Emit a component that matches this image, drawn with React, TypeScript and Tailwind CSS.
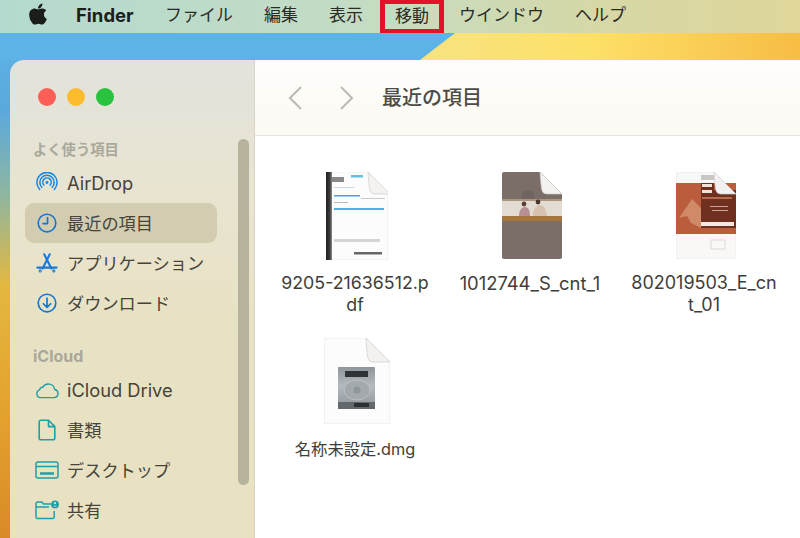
import React from "react";
import { FaApple } from "react-icons/fa";

const jp = "font-['Inter','Noto_Sans_CJK_JP',sans-serif]";

const menus = [
  { label: "ファイル", w: "w-[99px]" },
  { label: "編集", w: "w-[65px]" },
  { label: "表示", w: "w-[51px]" },
];

function MenuBar() {
  return (
    <div className="relative flex h-[33px] shrink-0 items-start bg-[linear-gradient(90deg,#b4dacf_0%,#c4dcc4_45%,#d6d8a6_75%,#dfd69a_100%)] text-[17px] leading-[31px] text-[#2a2c28]">
      <FaApple className="ml-[26px] mt-[2px] h-[24px] w-[24px] text-[#1b1d1a]" />
      <span className="ml-[26px] w-[89px] text-[18.5px] font-bold text-[#1c1e1b]">Finder</span>
      {menus.map((m) => (
        <span key={m.label} className={m.w}>
          {m.label}
        </span>
      ))}
      <span className="flex h-[33px] w-[64px] items-center justify-center border-x-[5px] border-y-[4px] border-[#e3122a]">移動</span>
      <span className="ml-[15px] w-[116px]">ウインドウ</span>
      <span>ヘルプ</span>
    </div>
  );
}

function AirDropIcon() {
  return (
    <svg viewBox="0 0 24 24" className="h-[22px] w-[22px]" fill="none" stroke="#1e87dc" strokeWidth="1.7" strokeLinecap="round">
      <circle cx="12" cy="11.5" r="1.6" fill="#1e87dc" stroke="none" />
      <path d="M8.6 14.2a4.6 4.6 0 1 1 6.8 0" />
      <path d="M6.3 16.6a7.8 7.8 0 1 1 11.4 0" />
      <path d="M4 19a11 11 0 1 1 16 0" />
    </svg>
  );
}

function ClockIcon() {
  return (
    <svg viewBox="0 0 24 24" className="h-[22px] w-[22px]" fill="none" stroke="#1277d2" strokeWidth="1.8" strokeLinecap="round" strokeLinejoin="round">
      <circle cx="12" cy="12" r="9.6" />
      <path d="M12.6 6v6.6H7.6" />
    </svg>
  );
}

function AppsIcon() {
  return (
    <svg viewBox="0 0 24 24" className="h-[22px] w-[22px]" fill="none" stroke="#1a7ad6" strokeWidth="2.3" strokeLinecap="round" strokeLinejoin="round">
      <path d="M9 2.5 16.8 18" />
      <path d="M15 2.5 7.2 18" />
      <path d="M1.5 17h21" />
      <circle cx="4.6" cy="20.6" r="0.6" />
      <circle cx="19.4" cy="20.6" r="0.6" />
    </svg>
  );
}

function DownloadIcon() {
  return (
    <svg viewBox="0 0 24 24" className="h-[22px] w-[22px]" fill="none" stroke="#1277d2" strokeWidth="1.8" strokeLinecap="round" strokeLinejoin="round">
      <circle cx="12" cy="12" r="9.6" />
      <path d="M12 6.5v10M8 12.8l4 3.9 4-3.9" />
    </svg>
  );
}

function CloudIcon() {
  return (
    <svg viewBox="0 0 26 20" className="h-[20px] w-[26px]" fill="none" stroke="#1f9fa8" strokeWidth="1.5" strokeLinejoin="round">
      <path d="M6 18.2h14.6a4.4 4.4 0 0 0 .8-8.7A7 7 0 0 0 8.4 7.1a3 3 0 0 0-3.4 2.7A4.3 4.3 0 0 0 6 18.2Z" />
    </svg>
  );
}

function DocIcon() {
  return (
    <svg viewBox="0 0 18 22" className="h-[22px] w-[18px]" fill="none" stroke="#1f9fa8" strokeWidth="1.6" strokeLinejoin="round">
      <path d="M3 1.2h7.5L16.8 7.6V19a1.8 1.8 0 0 1-1.8 1.8H3A1.8 1.8 0 0 1 1.2 19V3A1.8 1.8 0 0 1 3 1.2Z" />
      <path d="M10.5 1.2V7.6h6.3" />
    </svg>
  );
}

function DesktopIcon() {
  return (
    <svg viewBox="0 0 24 18" className="h-[18px] w-[24px]" fill="none" stroke="#1f9fa8" strokeWidth="1.5">
      <rect x="1" y="1" width="22" height="16" rx="2" />
      <path d="M1 5.5h22" />
      <path d="M5 12.5h14" strokeWidth="2.5" />
    </svg>
  );
}

function SharedIcon() {
  return (
    <svg viewBox="0 0 24 20" className="h-[20px] w-[24px]" fill="none" stroke="#1f9fa8" strokeWidth="1.5" strokeLinejoin="round">
      <path d="M16 4H8.6L7 2H2.6A1.6 1.6 0 0 0 1 3.6V17a1.6 1.6 0 0 0 1.6 1.6h15A1.6 1.6 0 0 0 19.2 17v-6" />
      <path d="M1 7h13" />
      <circle cx="20" cy="4.4" r="3.9" fill="#1f9fa8" stroke="none" />
      <circle cx="20" cy="3.2" r="1.1" fill="#e8e2c4" stroke="none" />
      <path d="M18 6.6c.5-1.2 3.5-1.2 4 0Z" fill="#e8e2c4" stroke="none" />
    </svg>
  );
}

function SidebarRow({ icon, label, latin, active }: { icon: React.ReactNode; label: string; latin?: boolean; active?: boolean }) {
  return (
    <div className={`flex h-[40px] shrink-0 items-center rounded-[9px] pl-[10px] text-[#45433a] ${latin ? "text-[18.3px]" : "text-[17.2px]"} ${active ? "bg-[#d2ccb0]" : ""}`}>
      <span className="flex w-[24px] items-center justify-center">{icon}</span>
      <span className="ml-[8px] translate-y-px">{label}</span>
    </div>
  );
}

function Sidebar() {
  return (
    <aside className="relative flex w-[245px] shrink-0 flex-col overflow-hidden border-r border-[#d9d5c2] bg-[linear-gradient(180deg,#e3e3dd_0%,#e8e4cf_30%,#e8e2c4_55%,#e8e2c3_100%)] pl-[15px] pr-[37px]">
      <div className="flex h-[74px] shrink-0 items-center gap-[11px] pl-[13px]">
        <span className="h-[18px] w-[18px] rounded-full bg-[#fd5f57]" />
        <span className="h-[18px] w-[18px] rounded-full bg-[#fdbc2e]" />
        <span className="h-[18px] w-[18px] rounded-full bg-[#29c33f]" />
      </div>
      <div className="h-[29px] shrink-0 pl-[8px] pt-[5px] text-[14.3px] font-bold leading-[22px] text-[#aaa89b]">よく使う項目</div>
      <SidebarRow icon={<AirDropIcon />} label="AirDrop" latin />
      <SidebarRow icon={<ClockIcon />} label="最近の項目" active />
      <SidebarRow icon={<AppsIcon />} label="アプリケーション" />
      <SidebarRow icon={<DownloadIcon />} label="ダウンロード" />
      <div className="h-[47px] shrink-0 pl-[8px] pt-[22px] text-[16px] font-bold leading-[22px] text-[#aaa89b]">iCloud</div>
      <SidebarRow icon={<CloudIcon />} label="iCloud Drive" latin />
      <SidebarRow icon={<DocIcon />} label="書類" />
      <SidebarRow icon={<DesktopIcon />} label="デスクトップ" />
      <SidebarRow icon={<SharedIcon />} label="共有" />
      <div className="absolute left-[228px] top-[79px] h-[346px] w-[11px] rounded-full bg-[#b6b29c]" />
    </aside>
  );
}

// page curl in the top right corner of a document icon
function Fold({ x, size }: { x: number; size: number }) {
  return (
    <path
      d={`M${x} 0Q${x + 1} ${size * 0.7} ${x + 2} ${size * 0.85}Q${x + 3} ${size} ${x + 7} ${size}H${x + size}Z`}
      fill="#f3f2f0"
      stroke="#cfcdca"
      strokeWidth="0.7"
    />
  );
}

function PdfThumb() {
  return (
    <svg viewBox="0 0 62 88" className="h-[88px] w-[62px] blur-[0.5px]">
      <defs>
        <linearGradient id="pdfSpine" x1="0" y1="0" x2="1" y2="0">
          <stop offset="0%" stopColor="#1f1f1f" />
          <stop offset="60%" stopColor="#3a3a3a" />
          <stop offset="100%" stopColor="#8a8a8a" />
        </linearGradient>
      </defs>
      <path d="M0 0H42L62 22V88H0Z" fill="#fcfcfc" stroke="#e4e3e1" strokeWidth="0.6" />
      <rect x="0" y="0" width="6" height="88" fill="url(#pdfSpine)" />
      <rect x="6" y="5" width="12" height="5" fill="#8a8a8a" />
      <rect x="25" y="3" width="12" height="2.5" fill="#62c0e3" />
      <rect x="8" y="23" width="26" height="1.5" fill="#36aedb" />
      <rect x="8" y="15" width="20" height="1" fill="#c7dbe4" />
      <rect x="8" y="30" width="14" height="1" fill="#bbb" />
      <rect x="35" y="26" width="24" height="1" fill="#ccc" />
      <rect x="8" y="36" width="50" height="2" fill="#49b5de" />
      <rect x="8" y="67" width="46" height="3" fill="#d5d5d5" />
      <rect x="28" y="80" width="28" height="2.5" fill="#666" />
      <Fold x={42} size={22} />
    </svg>
  );
}

function PhotoThumb() {
  return (
    <svg viewBox="0 0 60 87" className="h-[87px] w-[60px] blur-[0.5px]">
      <path d="M2 0H38L60 22V85Q60 87 58 87H2Q0 87 0 85V2Q0 0 2 0Z" fill="#7b6d67" />
      <rect x="0" y="28" width="60" height="16" fill="#e2dcd3" />
      <rect x="0" y="44" width="60" height="5" fill="#a5763e" />
      <path d="M0 27h60v2H0z" fill="#a8967f" />
      <path d="M17 44c0-6 3-9 6-9s5 3 5 9Z" fill="#b78f95" />
      <path d="M31 44c0-7 3-11 7-11s6 4 7 11Z" fill="#d7c2b0" />
      <circle cx="22" cy="32" r="2.4" fill="#5b4036" />
      <circle cx="36" cy="30" r="2.4" fill="#4a362d" />
      <path d="M20 20q6-3 12 0v7H20Z" fill="#6f6460" />
      <Fold x={38} size={22} />
    </svg>
  );
}

function BrochureThumb() {
  return (
    <svg viewBox="0 0 60 87" className="h-[87px] w-[60px] blur-[0.5px]">
      <path d="M0 0H38L60 22V87H0Z" fill="#f9f8f7" stroke="#e2e1df" strokeWidth="0.6" />
      <rect x="0" y="11" width="60" height="51" fill="#b95d3c" />
      <rect x="25" y="18" width="35" height="38" fill="#6f3020" />
      <rect x="25" y="11" width="13" height="11" fill="#6f3020" />
      <path d="M3 46 16 27l9 9v20l-10-5-4-7Z" fill="#d18a68" />
      <rect x="25" y="3" width="13" height="5" fill="#c9c7c4" />
      <rect x="26" y="12" width="10" height="3" fill="#f0e3dc" />
      <rect x="26" y="18" width="10" height="3" fill="#f0e3dc" />
      <rect x="26" y="25" width="30" height="2" fill="#b66c4d" />
      <rect x="34" y="34" width="18" height="1" fill="#c9a598" />
      <rect x="36" y="38" width="16" height="1" fill="#c9a598" />
      <rect x="25" y="50" width="33" height="4" fill="#f4e9e2" />
      <rect x="35" y="68" width="14" height="9" fill="none" stroke="#cfcfcf" strokeWidth="0.7" />
      <Fold x={38} size={22} />
    </svg>
  );
}

function DmgThumb() {
  return (
    <svg viewBox="0 0 66 86" className="h-[86px] w-[66px] blur-[0.5px]">
      <defs>
        <linearGradient id="dmgDisk" x1="0" y1="0" x2="0" y2="1">
          <stop offset="0%" stopColor="#8f969b" />
          <stop offset="45%" stopColor="#b4babe" />
          <stop offset="100%" stopColor="#8d9398" />
        </linearGradient>
      </defs>
      <path d="M2 0H42L66 24V84Q66 86 64 86H2Q0 86 0 84V2Q0 0 2 0Z" fill="#fcfcfc" stroke="#e3e2e0" strokeWidth="0.7" />
      <Fold x={42} size={24} />
      <rect x="14" y="29" width="37" height="42" rx="1" fill="url(#dmgDisk)" />
      <rect x="21" y="33" width="23" height="6" fill="#2f3336" />
      <ellipse cx="33" cy="52" rx="13" ry="10" fill="#a3a9ad" stroke="#c4c8cb" strokeWidth="0.7" />
      <circle cx="33" cy="52" r="3.5" fill="#8f969a" />
      <rect x="14" y="64" width="37" height="7" fill="#63686c" />
      <rect x="30" y="65" width="15" height="4" fill="#2d3033" />
    </svg>
  );
}

const files = [
  { thumb: <PdfThumb />, lines: ["9205-21636512.p", "df"], size: "text-[17.8px]" },
  { thumb: <PhotoThumb />, lines: ["1012744_S_cnt_1"], size: "text-[18.4px]" },
  { thumb: <BrochureThumb />, lines: ["802019503_E_cn", "t_01"], size: "text-[18px]" },
  { thumb: <DmgThumb />, lines: ["名称未設定.dmg"], size: "text-[16.3px]" },
];

function FileGrid() {
  return (
    <div className="grid flex-1 grid-cols-[176px_174px_174px] auto-rows-[166px] bg-white pl-[12px] pt-[36px] text-[#3f3e3b]">
      {files.map((f) => (
        <div key={f.lines[0]} className="flex flex-col items-center">
          <div className="flex h-[88px] items-start justify-center pl-[3px]">{f.thumb}</div>
          <div className={`mt-[12px] whitespace-nowrap text-center leading-[22px] ${f.size}`}>
            {f.lines.map((l) => (
              <div key={l}>{l}</div>
            ))}
          </div>
        </div>
      ))}
    </div>
  );
}

export default function App() {
  return (
    <div className={`flex h-[538px] w-[800px] flex-col overflow-hidden ${jp}`}>
      <MenuBar />
      <div className="relative flex min-h-0 flex-1 flex-col bg-[linear-gradient(180deg,#5eb3e6_0%,#5aa9dc_15%,#8fb6a0_32%,#e3b83f_50%,#e3a22e_75%,#d98a28_100%)] pl-[10px] pt-[27px]">
        <svg className="absolute left-0 top-0 h-[27px] w-[800px]" viewBox="0 0 800 27" preserveAspectRatio="none">
          <defs>
            <linearGradient id="wallSun" x1="0" y1="0" x2="1" y2="0">
              <stop offset="0%" stopColor="#f7e382" />
              <stop offset="45%" stopColor="#fde068" />
              <stop offset="100%" stopColor="#f7bd45" />
            </linearGradient>
          </defs>
          <rect width="800" height="27" fill="#5db3e6" />
          <path d="M455 0H800V27H420Z" fill="url(#wallSun)" />
        </svg>
        <div className="relative flex min-h-0 flex-1 overflow-hidden rounded-tl-[14px]">
          <Sidebar />
          <main className="flex min-w-0 flex-1 flex-col">
            <header className="flex h-[76px] shrink-0 items-center border-b border-[#e7e5df] bg-[linear-gradient(180deg,#fefdfb,#fcfaf3)] pl-[32px]">
              <svg viewBox="0 0 16 26" className="h-[26px] w-[16px]" fill="none" stroke="#bcbab4" strokeWidth="2">
                <path d="M14 2 3 13l11 11" />
              </svg>
              <svg viewBox="0 0 16 26" className="ml-[36px] h-[26px] w-[16px]" fill="none" stroke="#bcbab4" strokeWidth="2">
                <path d="M2 2l11 11L2 24" />
              </svg>
              <h1 className="ml-[27px] text-[20px] font-medium text-[#4c4b47]">最近の項目</h1>
            </header>
            <FileGrid />
          </main>
        </div>
      </div>
    </div>
  );
}
